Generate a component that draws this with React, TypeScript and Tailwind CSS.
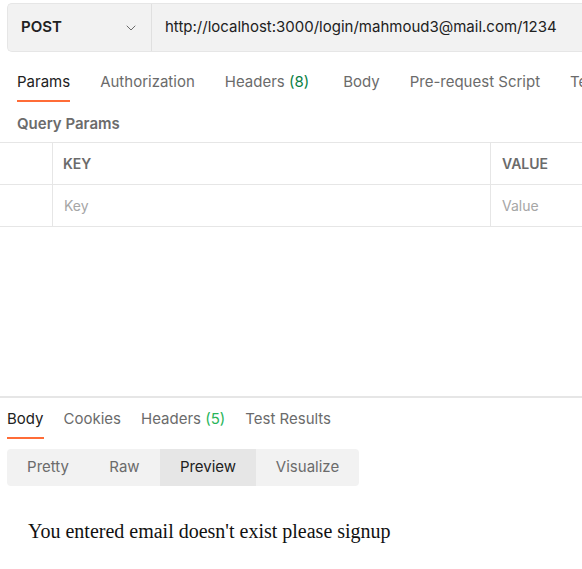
import { ChevronDown } from 'lucide-react';

const ui = { fontFamily: 'Inter, "Noto Sans", sans-serif' };

export default function App() {
  return (
    <div className="w-[582px] h-[569px] bg-white overflow-hidden relative" style={ui}>
      {/* Request bar */}
      <div className="pt-[3px] pl-[7px]">
        <div className="flex h-[49px] bg-[#f2f2f2] border border-r-0 border-[#e6e6e6] rounded-l-[5px]">
          <div className="w-[144px] flex items-center justify-between pl-[13px] pr-[12px] border-r border-[#e0e0e0]">
            <span className="text-[15px] font-semibold text-[#212121]">POST</span>
            <ChevronDown size={16} strokeWidth={1.5} className="text-[#6b6b6b]" />
          </div>
          <div className="flex-1 flex items-center pl-[13px] whitespace-nowrap overflow-hidden">
            <span className="text-[15px] text-[#212121]">http://localhost:3000/login/mahmoud3@mail.com/1234</span>
          </div>
        </div>
      </div>

      {/* Request tabs */}
      <div className="flex gap-[30px] pl-[17px] mt-[19px] whitespace-nowrap overflow-hidden text-[15px] text-[#6b6b6b]">
        <div className="flex flex-col">
          <span className="text-[#212121]">Params</span>
          <div className="h-[2px] bg-[#ff6c37] mt-[6px]" />
        </div>
        <span>Authorization</span>
        <span>Headers <span className="text-[#0a8043]">(8)</span></span>
        <span className="ml-[4px]">Body</span>
        <span>Pre-request Script</span>
        <span>Tests</span>
      </div>

      <div className="pl-[17px] mt-[11px] text-[15px] font-semibold text-[#6b6b6b]">Query Params</div>

      {/* Params table */}
      <div className="mt-[7px] border-t border-[#e6e6e6]">
        <div className="flex h-[42px] border-b border-[#e6e6e6]">
          <div className="w-[53px] border-r border-[#e6e6e6]" />
          <div className="w-[438px] border-r border-[#e6e6e6] flex items-center pl-[10px] text-[14px] font-semibold text-[#6b6b6b]">KEY</div>
          <div className="flex-1 flex items-center pl-[11px] text-[14px] font-semibold text-[#6b6b6b]">VALUE</div>
        </div>
        <div className="flex h-[42px] border-b border-[#e6e6e6]">
          <div className="w-[53px] border-r border-[#e6e6e6]" />
          <div className="w-[438px] border-r border-[#e6e6e6] flex items-center pl-[11px] text-[14px] text-[#a6a6a6]">Key</div>
          <div className="flex-1 flex items-center pl-[11px] text-[14px] text-[#a6a6a6]">Value</div>
        </div>
      </div>

      {/* Response */}
      <div className="mt-[169px] border-t-2 border-[#e6e6e6]">
        <div className="flex gap-[20px] pl-[7px] pt-[10px] whitespace-nowrap text-[15px] text-[#6b6b6b]">
          <div className="flex flex-col">
            <span className="text-[#212121]">Body</span>
            <div className="h-[2px] bg-[#ff6c37] mt-[6px]" />
          </div>
          <span>Cookies</span>
          <span>Headers <span className="text-[#28b55a]">(5)</span></span>
          <span>Test Results</span>
        </div>

        <div className="ml-[7px] mt-[10px] w-[352px] h-[37px] flex bg-[#f2f2f2] rounded-[4px] overflow-hidden text-[15px] text-[#6b6b6b]">
          <div className="w-[82px] flex items-center justify-center">Pretty</div>
          <div className="w-[71px] flex items-center justify-center">Raw</div>
          <div className="w-[96px] flex items-center justify-center bg-[#e6e6e6] text-[#212121]">Preview</div>
          <div className="flex-1 flex items-center justify-center">Visualize</div>
        </div>

        <div className="pl-[28px] mt-[30px] text-[20px] text-[#111]" style={{ fontFamily: '"Liberation Serif", serif' }}>
          You entered email doesn't exist please signup
        </div>
      </div>
    </div>
  );
}
